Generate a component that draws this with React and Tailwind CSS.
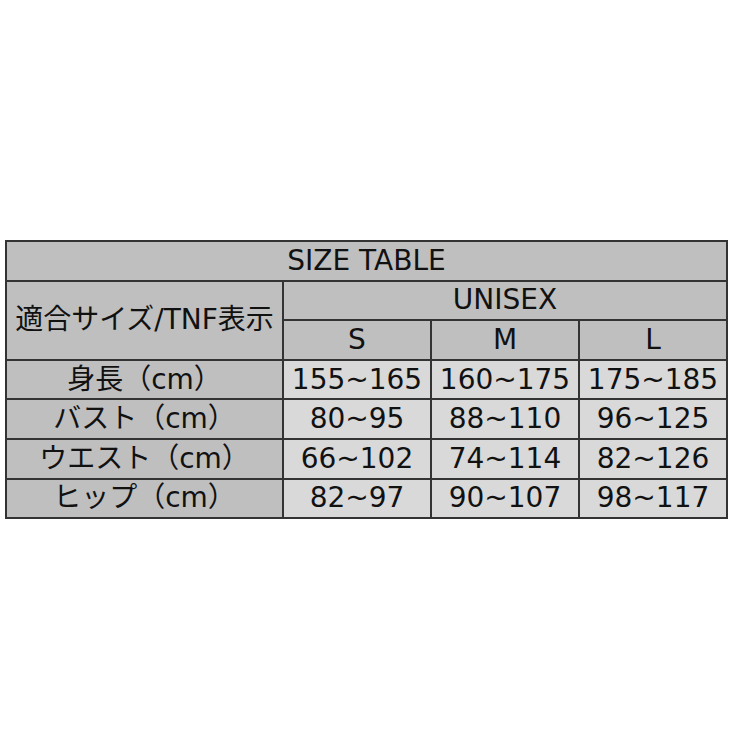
export default function App() {
  const rows = [
    ["身長（cm）", "155~165", "160~175", "175~185"],
    ["バスト（cm）", "80~95", "88~110", "96~125"],
    ["ウエスト（cm）", "66~102", "74~114", "82~126"],
    ["ヒップ（cm）", "82~97", "90~107", "98~117"],
  ];
  const font = { fontFamily: '"DejaVu Sans", "Noto Sans CJK JP", sans-serif' };
  const cell = "border-2 border-[#333333] text-center p-0 h-[39.6px] leading-none";
  return (
    <div className="w-[730px] h-[730px] bg-white pt-[240px] pl-[5px]" style={font}>
      <table className="table-fixed border-collapse w-[721px] text-[28px] text-[#111111]">
        <colgroup>
          <col className="w-[277px]" />
          <col className="w-[148px]" />
          <col className="w-[148px]" />
          <col className="w-[148px]" />
        </colgroup>
        <tbody>
          <tr>
            <td colSpan={4} className={`${cell} bg-[#bfbfbf]`}>SIZE TABLE</td>
          </tr>
          <tr>
            <td rowSpan={2} className={`${cell} bg-[#bfbfbf]`}>適合サイズ/TNF表示</td>
            <td colSpan={3} className={`${cell} bg-[#bfbfbf]`}>UNISEX</td>
          </tr>
          <tr>
            <td className={`${cell} bg-[#bfbfbf]`}>S</td>
            <td className={`${cell} bg-[#bfbfbf]`}>M</td>
            <td className={`${cell} bg-[#bfbfbf]`}>L</td>
          </tr>
          {rows.map((r) => (
            <tr key={r[0]}>
              <td className={`${cell} bg-[#bfbfbf]`}>{r[0]}</td>
              <td className={`${cell} bg-[#d9d9d9]`}>{r[1]}</td>
              <td className={`${cell} bg-[#d9d9d9]`}>{r[2]}</td>
              <td className={`${cell} bg-[#d9d9d9]`}>{r[3]}</td>
            </tr>
          ))}
        </tbody>
      </table>
    </div>
  );
}
